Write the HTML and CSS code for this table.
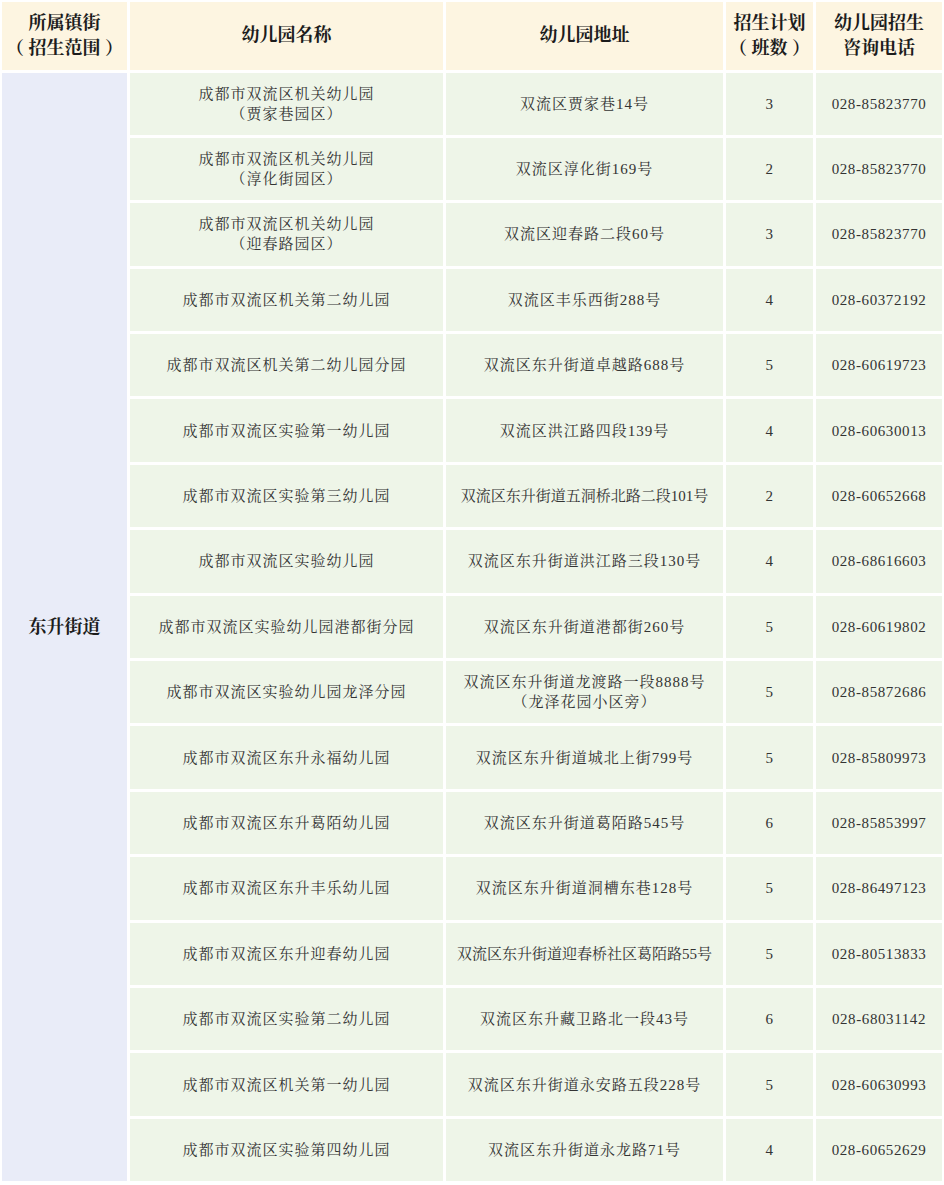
FILE: index.html
```html
<!DOCTYPE html>
<html lang="zh-CN">
<head>
<meta charset="utf-8">
<title>东升街道幼儿园招生计划</title>
<link rel="stylesheet" href="styles.css">
</head>
<body>
<div class="grid">
  <div class="cell head">所属镇街<br>（ 招生范围 ）</div>
  <div class="cell head">幼儿园名称</div>
  <div class="cell head">幼儿园地址</div>
  <div class="cell head">招生计划<br>（ 班数 ）</div>
  <div class="cell head">幼儿园招生<br>咨询电话</div>

  <div class="cell area">东升街道</div>

  <div class="cell">成都市双流区机关幼儿园<br>（贾家巷园区）</div>
  <div class="cell">双流区贾家巷14号</div>
  <div class="cell num">3</div>
  <div class="cell num">028-85823770</div>

  <div class="cell">成都市双流区机关幼儿园<br>（淳化街园区）</div>
  <div class="cell">双流区淳化街169号</div>
  <div class="cell num">2</div>
  <div class="cell num">028-85823770</div>

  <div class="cell">成都市双流区机关幼儿园<br>（迎春路园区）</div>
  <div class="cell">双流区迎春路二段60号</div>
  <div class="cell num">3</div>
  <div class="cell num">028-85823770</div>

  <div class="cell">成都市双流区机关第二幼儿园</div>
  <div class="cell">双流区丰乐西街288号</div>
  <div class="cell num">4</div>
  <div class="cell num">028-60372192</div>

  <div class="cell">成都市双流区机关第二幼儿园分园</div>
  <div class="cell">双流区东升街道卓越路688号</div>
  <div class="cell num">5</div>
  <div class="cell num">028-60619723</div>

  <div class="cell">成都市双流区实验第一幼儿园</div>
  <div class="cell">双流区洪江路四段139号</div>
  <div class="cell num">4</div>
  <div class="cell num">028-60630013</div>

  <div class="cell">成都市双流区实验第三幼儿园</div>
  <div class="cell tight">双流区东升街道五洞桥北路二段101号</div>
  <div class="cell num">2</div>
  <div class="cell num">028-60652668</div>

  <div class="cell">成都市双流区实验幼儿园</div>
  <div class="cell">双流区东升街道洪江路三段130号</div>
  <div class="cell num">4</div>
  <div class="cell num">028-68616603</div>

  <div class="cell">成都市双流区实验幼儿园港都街分园</div>
  <div class="cell">双流区东升街道港都街260号</div>
  <div class="cell num">5</div>
  <div class="cell num">028-60619802</div>

  <div class="cell">成都市双流区实验幼儿园龙泽分园</div>
  <div class="cell">双流区东升街道龙渡路一段8888号<br>（龙泽花园小区旁）</div>
  <div class="cell num">5</div>
  <div class="cell num">028-85872686</div>

  <div class="cell">成都市双流区东升永福幼儿园</div>
  <div class="cell">双流区东升街道城北上街799号</div>
  <div class="cell num">5</div>
  <div class="cell num">028-85809973</div>

  <div class="cell">成都市双流区东升葛陌幼儿园</div>
  <div class="cell">双流区东升街道葛陌路545号</div>
  <div class="cell num">6</div>
  <div class="cell num">028-85853997</div>

  <div class="cell">成都市双流区东升丰乐幼儿园</div>
  <div class="cell">双流区东升街道洞槽东巷128号</div>
  <div class="cell num">5</div>
  <div class="cell num">028-86497123</div>

  <div class="cell">成都市双流区东升迎春幼儿园</div>
  <div class="cell tight">双流区东升街道迎春桥社区葛陌路55号</div>
  <div class="cell num">5</div>
  <div class="cell num">028-80513833</div>

  <div class="cell">成都市双流区实验第二幼儿园</div>
  <div class="cell">双流区东升藏卫路北一段43号</div>
  <div class="cell num">6</div>
  <div class="cell num">028-68031142</div>

  <div class="cell">成都市双流区机关第一幼儿园</div>
  <div class="cell">双流区东升街道永安路五段228号</div>
  <div class="cell num">5</div>
  <div class="cell num">028-60630993</div>

  <div class="cell">成都市双流区实验第四幼儿园</div>
  <div class="cell">双流区东升街道永龙路71号</div>
  <div class="cell num">4</div>
  <div class="cell num">028-60652629</div>
</div>
</body>
</html>
```

FILE: styles.css
```css
html, body {
  margin: 0;
  padding: 0;
  background: #ffffff;
}

body {
  font-family: "Liberation Serif", "Noto Serif CJK SC", "Noto Sans CJK SC", serif;
  color: #333333;
}

.grid {
  display: grid;
  grid-template-columns: 125px 313px 277px 87px 126px;
  grid-template-rows: 67.5px repeat(17, 62.4px);
  gap: 3px;
  padding: 2px;
  width: 940px;
}

.cell {
  display: flex;
  align-items: center;
  justify-content: center;
  text-align: center;
  background: #eef5e8;
  font-size: 15px;
  line-height: 20px;
  letter-spacing: 1px;
  white-space: nowrap;
  overflow: hidden;
}

.head {
  background: #fdf5e1;
  color: #1c1c1c;
  font-size: 18px;
  line-height: 25px;
  font-weight: bold;
  letter-spacing: 0;
}

.area {
  grid-column: 1;
  grid-row: 2 / span 17;
  background: #e9ecf8;
  color: #1c1c1c;
  font-size: 18px;
  font-weight: bold;
  letter-spacing: 0;
}

.tight {
  letter-spacing: 0;
}

.num {
  letter-spacing: 0.6px;
}
```
